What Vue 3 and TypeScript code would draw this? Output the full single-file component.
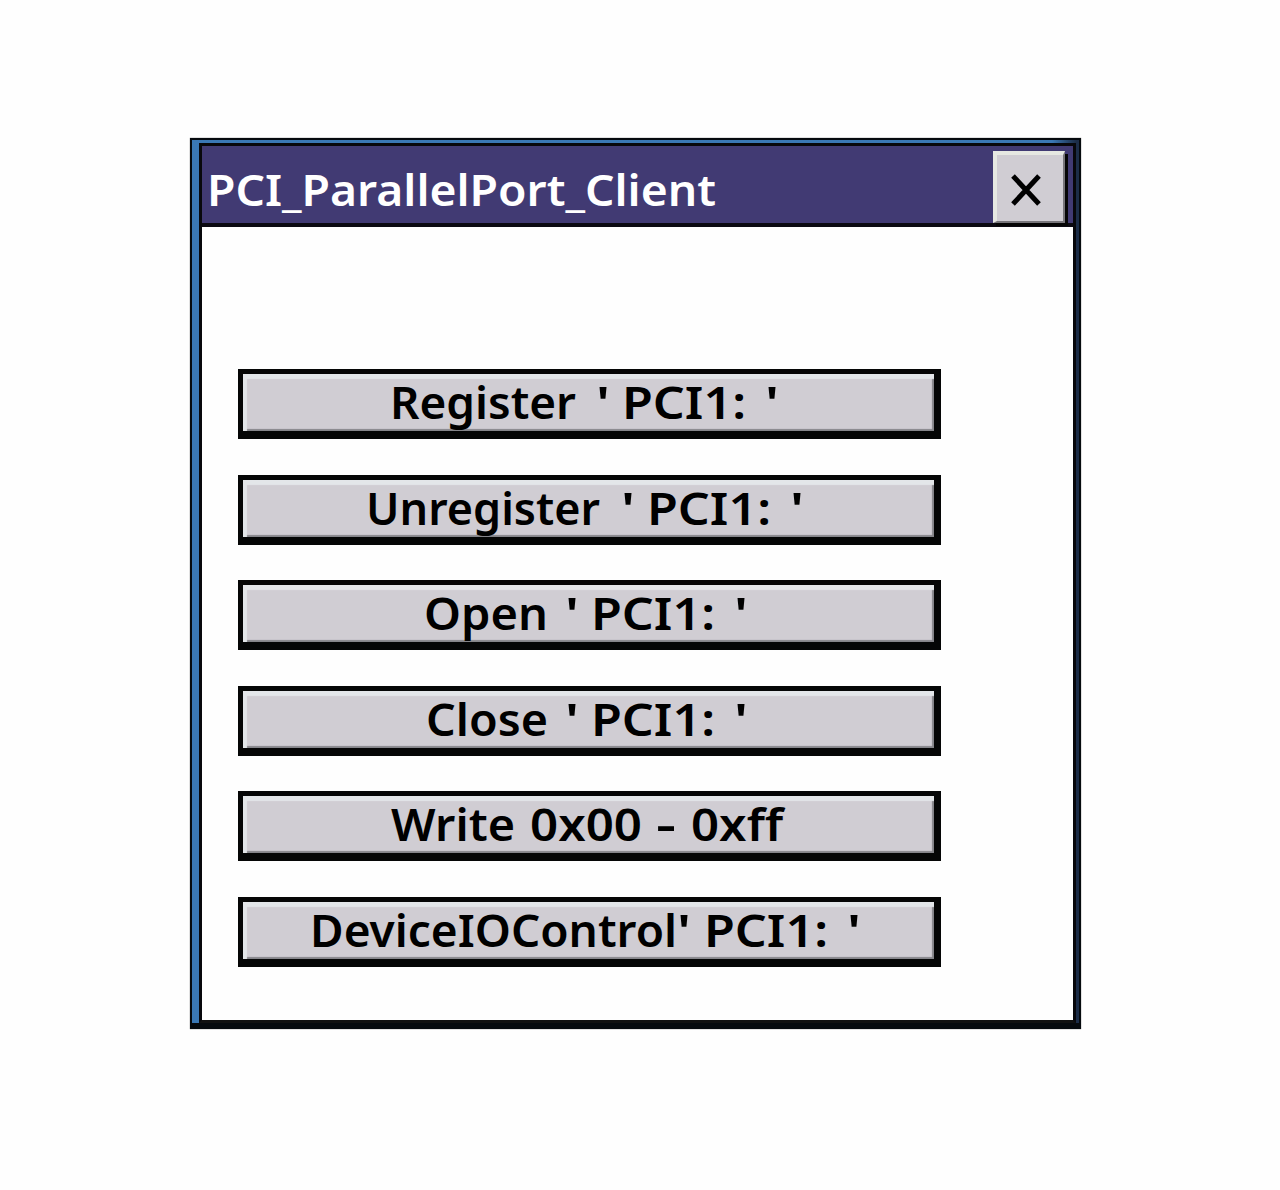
<script setup lang="ts">
interface Word {
  text: string;
  x: number;
  width: number;
}

interface Action {
  id: string;
  words: Word[];
}

const word = (text: string, x: number, width: number): Word => ({ text, x, width });

// x is measured from the left edge of the button face
const actions: Action[] = [
  { id: 'register', words: [word('Register', 147, 186), word("'", 353, 14), word('PCI1:', 379, 124), word("'", 522, 14)] },
  { id: 'unregister', words: [word('Unregister', 123, 234), word("'", 378, 14), word('PCI1:', 404, 124), word("'", 547, 14)] },
  { id: 'open', words: [word('Open', 181, 124), word("'", 322, 14), word('PCI1:', 348, 124), word("'", 491, 14)] },
  { id: 'close', words: [word('Close', 183, 122), word("'", 322, 14), word('PCI1:', 348, 124), word("'", 491, 14)] },
  { id: 'write', words: [word('Write', 148, 124), word('0x00', 287, 112), word('-', 413, 20), word('0xff', 448, 92)] },
  { id: 'control', words: [word('DeviceIOControl', 67, 367), word("'", 434, 14), word('PCI1:', 461, 124), word("'", 604, 14)] },
];
</script>

<template>
  <main class="page">
    <section class="window">
      <div class="frame">
        <header class="titlebar">
          <svg class="title" viewBox="0 0 520 77">
            <text x="3" y="55" textLength="509" lengthAdjust="spacingAndGlyphs">PCI_ParallelPort_Client</text>
          </svg>
          <button class="close" aria-label="Close">
            <svg viewBox="0 0 60 60">
              <path d="M16 18L42 46M42 18L16 46" />
            </svg>
          </button>
        </header>
        <div class="body">
          <button v-for="action in actions" :key="action.id" class="btn">
            <svg viewBox="0 0 691 57">
              <text
                v-for="(w, i) in action.words"
                :key="i"
                :x="w.x"
                y="44.5"
                :textLength="w.width"
                lengthAdjust="spacingAndGlyphs"
              >{{ w.text }}</text>
            </svg>
          </button>
        </div>
      </div>
    </section>
  </main>
</template>

<style>
body {
  background: #fefefe;
}
</style>

<style scoped>
.page {
  box-sizing: border-box;
  width: 1280px;
  height: 1190px;
  padding: 138px 0 0 190px;
}
.window {
  box-sizing: border-box;
  width: 891px;
  height: 891px;
  border: 2px solid #060a0e;
  border-bottom-width: 6px;
  padding: 3px 3px 0 7px;
  background: linear-gradient(to right, #3a78b5 0 860px, #1c2d48 884px);
  box-shadow: 0 0 1px #555;
}
.frame {
  box-sizing: border-box;
  width: 877px;
  height: 880px;
  border: 3px solid #08080c;
  border-bottom-color: #111;
  background: #fefefe;
}
.titlebar {
  display: flex;
  box-sizing: border-box;
  justify-content: space-between;
  height: 81px;
  padding: 5px 8px 0 2px;
  background: #413a73;
  border-bottom: 4px solid #0b0911;
}
.title {
  width: 520px;
  height: 77px;
  flex: none;
}
.title text {
  fill: #fff;
  font: 600 44px "Noto Sans", sans-serif;
}
.close {
  box-sizing: border-box;
  width: 72px;
  height: 72px;
  flex: none;
  padding: 0;
  border: 4px solid;
  border-color: #e6e8e2 #77757a #77757a #e6e8e2;
  border-right-width: 2px;
  border-bottom-width: 2px;
  background: #d0cdd3;
  box-shadow: 3px 3px 0 #050505;
}
.close svg {
  display: block;
  width: 60px;
  height: 60px;
}
.close path {
  fill: none;
  stroke: #000;
  stroke-width: 5;
}
.body {
  display: flex;
  flex-direction: column;
  gap: 35.6px;
  padding: 142px 0 0 36px;
}
.btn {
  box-sizing: border-box;
  width: 703px;
  height: 70px;
  padding: 0;
  border: solid #050606;
  border-width: 5px 7px 8px 5px;
  background: #d0cdd3;
  box-shadow: inset 4px 5px 1px #e3e6e9, inset -2px -2px 1px #85858a;
}
.btn svg {
  display: block;
  width: 691px;
  height: 57px;
}
.btn text {
  fill: #000;
  font: 600 45px "Noto Sans", sans-serif;
}
</style>
